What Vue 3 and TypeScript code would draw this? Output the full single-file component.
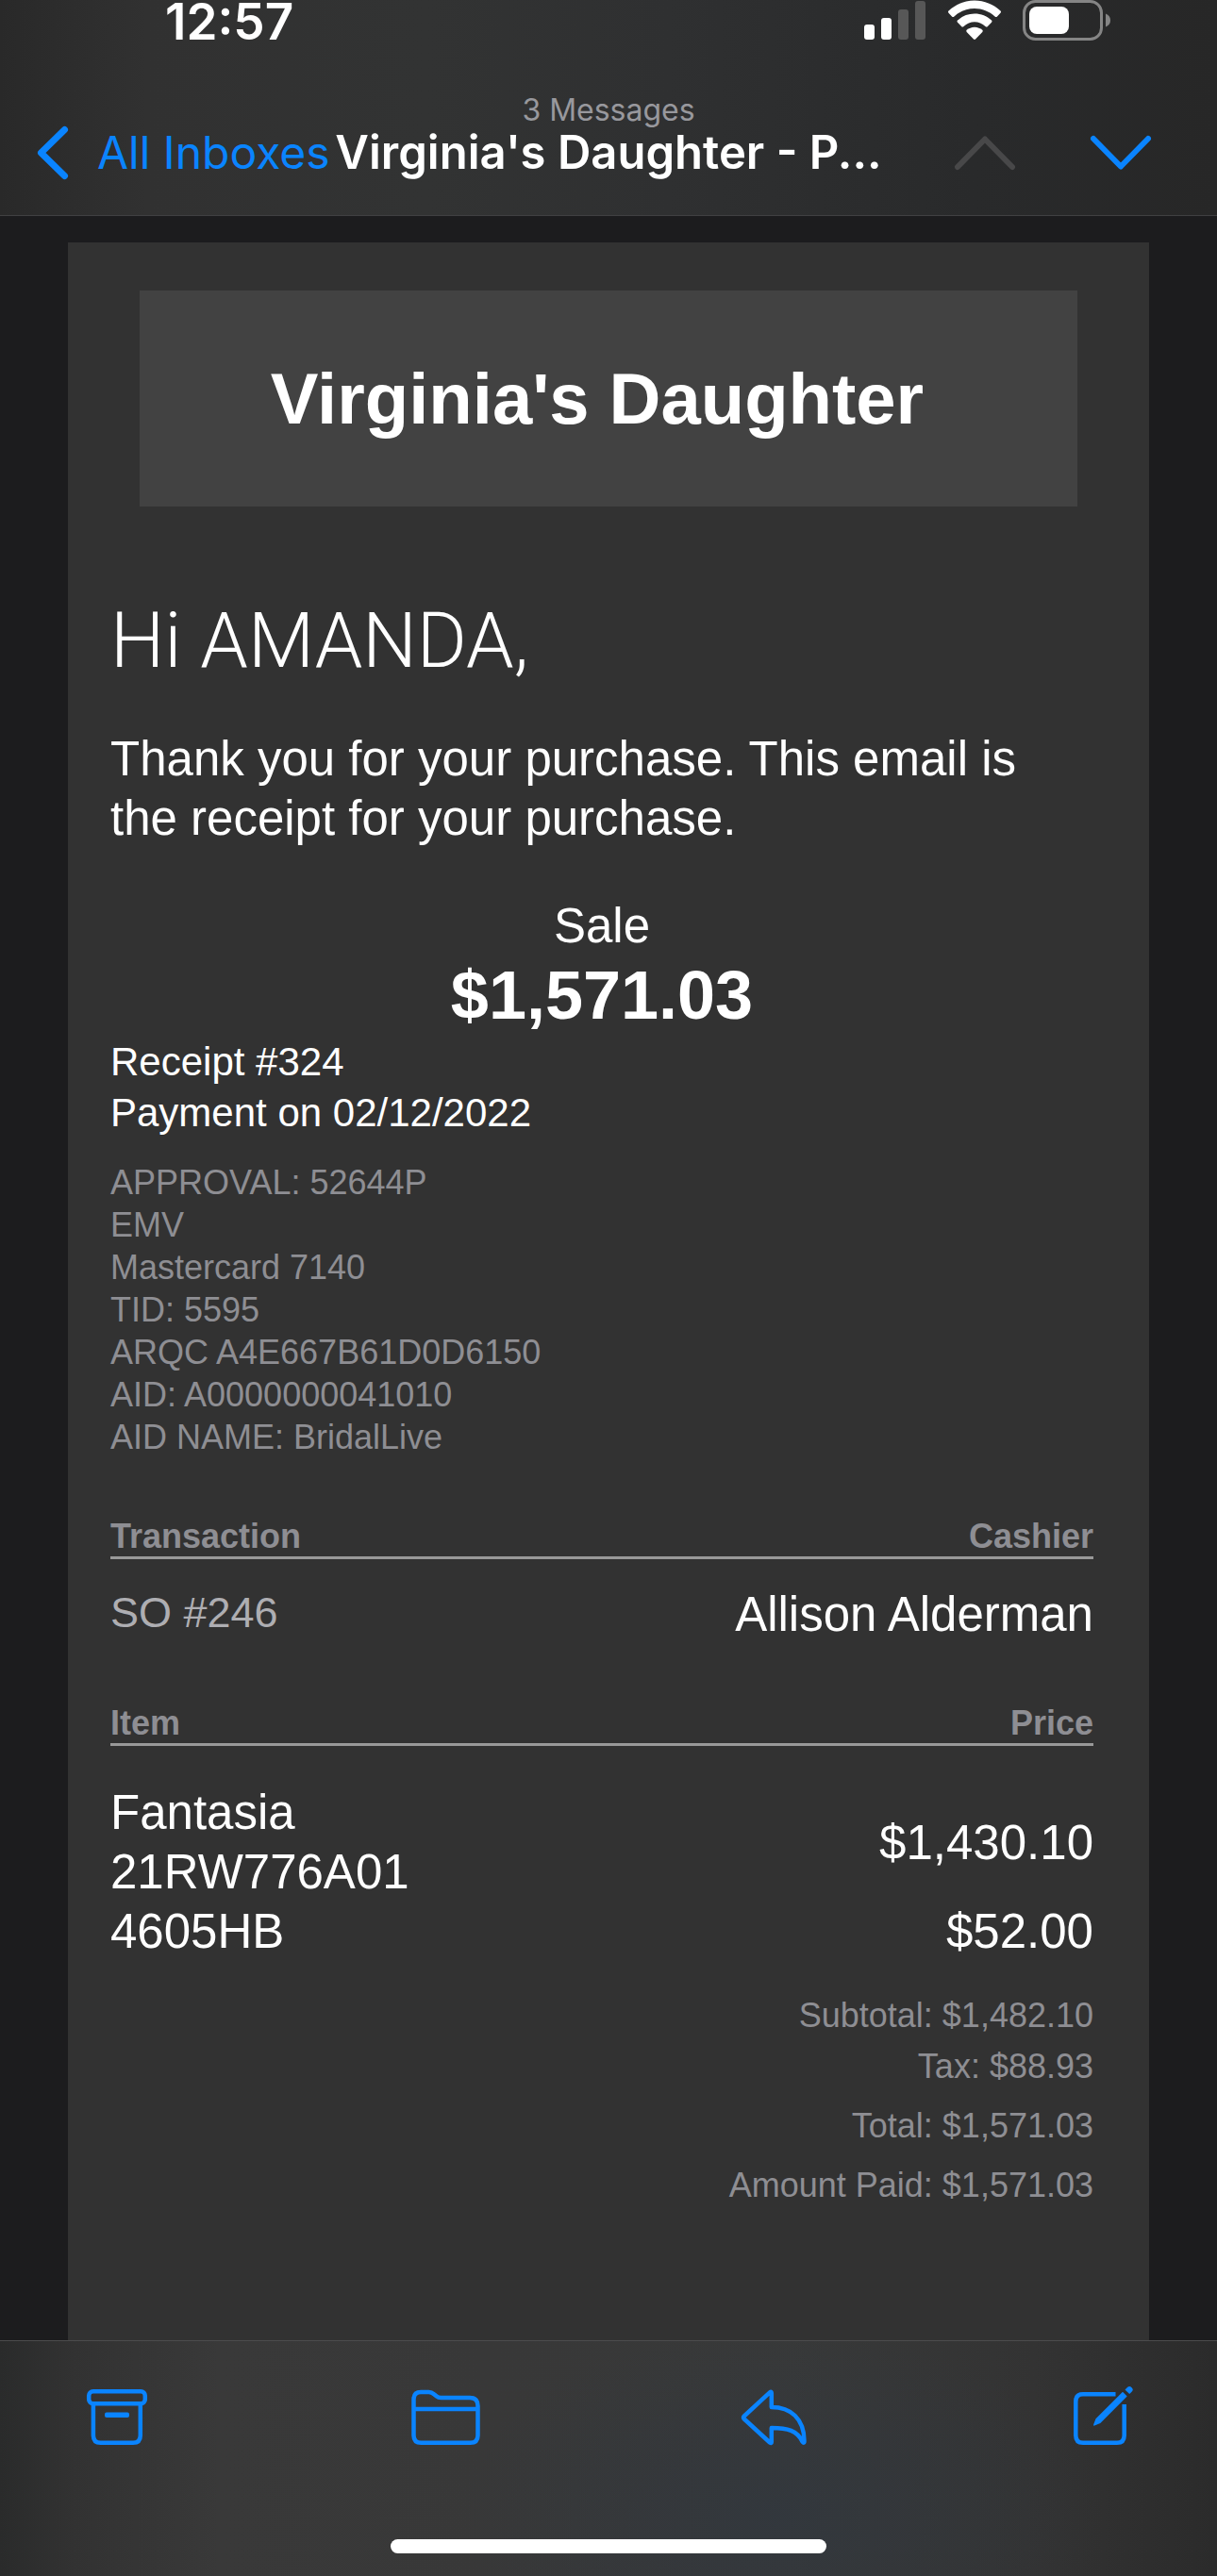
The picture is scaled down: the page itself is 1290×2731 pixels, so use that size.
<script setup lang="ts">
interface Line { label: string; value: string }

const cardDetails: string[] = [
  'APPROVAL: 52644P',
  'EMV',
  'Mastercard 7140',
  'TID: 5595',
  'ARQC A4E667B61D0D6150',
  'AID: A0000000041010',
  'AID NAME: BridalLive',
]

const items: { name: string[]; price: string }[] = [
  { name: ['Fantasia', '21RW776A01'], price: '$1,430.10' },
  { name: ['4605HB'], price: '$52.00' },
]

const taxLines: Line[] = [
  { label: 'Subtotal:', value: '$1,482.10' },
  { label: 'Tax:', value: '$88.93' },
]

const totalLines: Line[] = [
  { label: 'Total:', value: '$1,571.03' },
  { label: 'Amount Paid:', value: '$1,571.03' },
]
</script>

<template>
  <div class="screen">
    <header class="top">
      <div class="status">
        <time class="clock">12:57</time>
        <div class="indicators">
          <svg width="66" height="44" viewBox="0 0 66 44" aria-label="Signal">
            <rect x="0" y="26" width="11" height="16" rx="3" fill="#fff" />
            <rect x="18" y="19" width="11" height="23" rx="3" fill="#fff" />
            <rect x="36" y="10" width="11" height="32" rx="3" fill="#575757" />
            <rect x="54" y="1" width="11" height="41" rx="3" fill="#575757" />
          </svg>
          <svg width="58" height="44" viewBox="0 0 58 44" aria-label="Wi-Fi">
            <path fill="#fff" d="M29 0.500C39.500 0.500 49 4.500 56.500 11.500Q57.500 12.600 56.500 13.700L53 17.500Q51.800 18.500 50.600 17.500C44.500 12 37 9 29 9S13.500 12 7.400 17.500Q6.200 18.500 5 17.500L1.500 13.700Q0.500 12.600 1.500 11.500C9 4.500 18.500 0.500 29 0.500Z" />
            <path fill="#fff" d="M29 14.500C36 14.500 42 17 47 21.500Q48 22.600 47 23.700L42.900 28Q41.700 29 40.500 28C37.200 25 33.200 23.300 29 23.300S20.800 25 17.500 28Q16.300 29 15.100 28L11 23.700Q10 22.600 11 21.500C16 17 22 14.500 29 14.500Z" />
            <path fill="#fff" d="M29 28.700C32.300 28.700 35 30 37.300 31.800Q38.300 32.800 37.300 33.900L30 41.500Q29 42.300 28 41.500L20.700 33.900Q19.700 32.800 20.700 31.800C23 30 25.700 28.700 29 28.700Z" />
          </svg>
          <svg width="94" height="44" viewBox="0 0 94 44" aria-label="Battery">
            <rect x="1.500" y="1.500" width="82" height="40" rx="12" fill="none" stroke="#858585" stroke-width="3" />
            <rect x="7" y="7" width="42" height="29" rx="8" fill="#fff" />
            <path d="M88 14.500Q93 16.500 93 21.500T88 28.500Z" fill="#858585" />
          </svg>
        </div>
      </div>
      <nav class="nav">
        <a class="back" href="#">
          <svg width="34" height="58" viewBox="0 0 34 58" aria-hidden="true">
            <path d="M29.500 4.500L4.500 29L29.500 53.500" fill="none" stroke="#0a84ff" stroke-width="7" stroke-linecap="round" stroke-linejoin="round" />
          </svg>
          <span>All Inboxes</span>
        </a>
        <div class="heading">
          <p class="count">3 Messages</p>
          <p class="subject">Virginia's Daughter - P...</p>
        </div>
        <div class="arrows">
          <button type="button" aria-label="Previous message" disabled>
            <svg width="66" height="38" viewBox="0 0 66 38">
              <path d="M4 34L33 4.500L62 34" fill="none" stroke="#484849" stroke-width="6" stroke-linecap="round" stroke-linejoin="round" />
            </svg>
          </button>
          <button type="button" aria-label="Next message">
            <svg width="66" height="38" viewBox="0 0 66 38">
              <path d="M4 4L33 33.500L62 4" fill="none" stroke="#0a84ff" stroke-width="6" stroke-linecap="round" stroke-linejoin="round" />
            </svg>
          </button>
        </div>
      </nav>
    </header>

    <main class="body">
      <article class="card">
        <h1 class="banner">Virginia's Daughter</h1>
        <div class="content">
          <h2 class="greeting">Hi AMANDA,</h2>
          <p class="intro">Thank you for your purchase. This email is the receipt for your purchase.</p>
          <p class="sale">Sale</p>
          <p class="amount">$1,571.03</p>
          <p class="receipt">Receipt #324</p>
          <p class="receipt">Payment on 02/12/2022</p>
          <ul class="details">
            <li v-for="line in cardDetails" :key="line">{{ line }}</li>
          </ul>

          <table class="grid transaction">
            <thead>
              <tr><th>Transaction</th><th>Cashier</th></tr>
            </thead>
            <tbody>
              <tr><td class="order">SO #246</td><td>Allison Alderman</td></tr>
            </tbody>
          </table>

          <table class="grid items">
            <thead>
              <tr><th>Item</th><th>Price</th></tr>
            </thead>
            <tbody>
              <tr v-for="item in items" :key="item.price">
                <td><div v-for="part in item.name" :key="part">{{ part }}</div></td>
                <td>{{ item.price }}</td>
              </tr>
            </tbody>
          </table>

          <dl class="totals">
            <div v-for="line in taxLines" :key="line.label">
              <dt>{{ line.label }}</dt><dd>{{ line.value }}</dd>
            </div>
            <div v-for="line in totalLines" :key="line.label" class="spaced">
              <dt>{{ line.label }}</dt><dd>{{ line.value }}</dd>
            </div>
          </dl>
        </div>
      </article>
    </main>

    <footer class="bottom">
      <div class="toolbar">
        <button type="button" aria-label="Archive">
          <svg width="76" height="76" viewBox="0 0 76 76">
            <rect x="8.200" y="10.300" width="59.600" height="13" rx="4.500" />
            <path d="M12.900 24V57Q12.900 64.800 20.700 64.800H55Q62.800 64.800 62.800 57V24" />
            <rect class="solid" x="25" y="32.500" width="26" height="5.500" rx="2" />
          </svg>
        </button>
        <button type="button" aria-label="Move to folder">
          <svg width="76" height="76" viewBox="0 0 76 76">
            <path d="M3.500 57V19Q3.500 11 11 11H19.500Q22.500 11 25 13.200L27.500 15.300Q29.500 17 32.500 17H63Q71.500 17 71.500 25.500V57Q71.500 64.800 63.500 64.800H11.500Q3.500 64.800 3.500 57ZM3.500 29H71.500" />
          </svg>
        </button>
        <button type="button" aria-label="Reply">
          <svg width="76" height="76" viewBox="0 0 76 76">
            <path d="M34.800 12V27C55 27 69.500 39 69.500 63Q69.500 66 67.500 63.500C62 52 52 49 34.800 49V64Q34.800 65.800 33 64.500L5.800 39.500Q4.200 38 5.800 36.500L33 11.300Q34.800 10 34.800 12Z" />
          </svg>
        </button>
        <button type="button" aria-label="Compose">
          <svg width="76" height="76" viewBox="0 0 76 76">
            <path d="M50.500 13.300H16Q8.300 13.300 8.300 21V57Q8.300 64.800 16 64.800H52Q59.700 64.800 59.700 57V24" />
            <path class="solid" d="M27.300 46.600Q26.800 46.200 27.200 45.300L29.500 39.300L58 10.800L62.700 15.500L34.300 43.900L28.200 46.500Q27.600 46.800 27.300 46.600ZM60.500 8.400L63 5.900Q65.200 3.800 67.600 6.200T67.600 10.700L65.200 13.100Z" />
          </svg>
        </button>
      </div>
      <div class="home"></div>
    </footer>
  </div>
</template>

<style>
body {
  margin: 0;
  background: #1c1c1e;
}
</style>

<style scoped>
.screen {
  display: flex;
  flex-direction: column;
  min-height: 100vh;
  background: #1c1c1e;
  color: #fff;
  font-family: "Liberation Sans", Arial, sans-serif;
}
p, h1, h2, ul, dl, dd {
  margin: 0;
  padding: 0;
}
svg {
  display: block;
}
button {
  padding: 0;
  border: 0;
  background: none;
}
.top {
  box-sizing: border-box;
  height: 229px;
  border-bottom: 1px solid #404042;
  background: linear-gradient(90deg, #292929 0, #313131 12%, #323333 35%, #2f3031 55%, #292a2b 80%, #272727 100%);
  font-family: Inter, Roboto, sans-serif;
}
.status {
  display: flex;
  justify-content: space-between;
  height: 56px;
  padding: 0 112px 0 175px;
}
.clock {
  font-size: 53px;
  font-weight: 600;
  line-height: 46px;
}
.indicators {
  display: flex;
  gap: 22px;
}
.nav {
  display: grid;
  grid-template-columns: 1fr auto 1fr;
}
.back {
  display: flex;
  align-items: center;
  gap: 30px;
  padding: 76px 0 0 39px;
  color: #0a84ff;
  font-size: 48px;
  line-height: 60px;
  text-decoration: none;
  white-space: nowrap;
}
.heading {
  padding-top: 40px;
  text-align: center;
  white-space: nowrap;
}
.count {
  color: #98989d;
  font-size: 32px;
  line-height: 42px;
}
.subject {
  font-size: 49px;
  font-weight: 600;
  line-height: 48px;
}
.arrows {
  display: flex;
  justify-content: flex-end;
  align-items: center;
  gap: 78px;
  padding: 76px 69px 0 0;
}
.body {
  display: flex;
  flex: 1;
  padding: 28px 72px 0;
}
.card {
  flex: 1;
  background: #323232;
}
.banner {
  margin: 51px 76px 94px;
  padding-right: 24px;
  background: #424242;
  font-size: 76px;
  line-height: 229px;
  text-align: center;
}
.content {
  padding: 0 59px 120px 45px;
  font-size: 51px;
  line-height: 63px;
}
.greeting {
  margin-bottom: 44px;
  font-family: Roboto, sans-serif;
  font-size: 81px;
  font-weight: 300;
  line-height: 98px;
}
.intro {
  margin-bottom: 51px;
}
.sale {
  text-align: center;
}
.amount {
  margin-bottom: 2px;
  font-size: 72px;
  font-weight: 700;
  line-height: 84px;
  text-align: center;
}
.receipt {
  font-size: 42px;
  line-height: 54px;
}
.details {
  margin: 24px 0 62px;
  list-style: none;
  color: #8e8e93;
  font-size: 36px;
  line-height: 45px;
}
.grid {
  width: 100%;
  border-collapse: separate;
  border-spacing: 0;
}
.grid th {
  padding: 0;
  border-bottom: 3px solid #999;
  color: #8e8e93;
  font-size: 36px;
  line-height: 42px;
  text-align: left;
}
.grid td {
  padding: 0;
}
.grid th:last-child,
.grid td:last-child {
  text-align: right;
}
.transaction {
  margin-bottom: 63px;
}
.transaction td {
  padding-top: 27px;
}
.grid .order {
  color: #aeaeb2;
  font-size: 45px;
  line-height: 60px;
  vertical-align: top;
}
.items tbody tr:first-child td {
  padding-top: 39px;
}
.totals {
  padding-top: 31px;
  color: #8e8e93;
  font-size: 36px;
  line-height: 54px;
}
.totals div {
  display: flex;
  justify-content: flex-end;
  gap: 10px;
}
.totals .spaced {
  margin-top: 9px;
}
.bottom {
  box-sizing: border-box;
  height: 250px;
  padding-top: 43px;
  border-top: 1px solid #4c4c4d;
  background:
    radial-gradient(ellipse 340px 200px at 64% 75%, rgba(49, 55, 62, 0.8), rgba(49, 55, 62, 0)),
    linear-gradient(90deg, #2a2b2b 0, #323232 6%, #393939 18%, #383838 40%, #383939 65%, #333 85%, #2b2b2b 100%);
}
.toolbar {
  display: flex;
  justify-content: space-between;
  padding: 0 82px 0 86px;
}
.toolbar svg {
  fill: none;
  stroke: #0a84ff;
  stroke-width: 4.5;
  stroke-linejoin: round;
}
.toolbar .solid {
  fill: #0a84ff;
  stroke: none;
}
.home {
  width: 462px;
  height: 15px;
  margin: 91px auto 0;
  border-radius: 8px;
  background: #fff;
}
</style>
